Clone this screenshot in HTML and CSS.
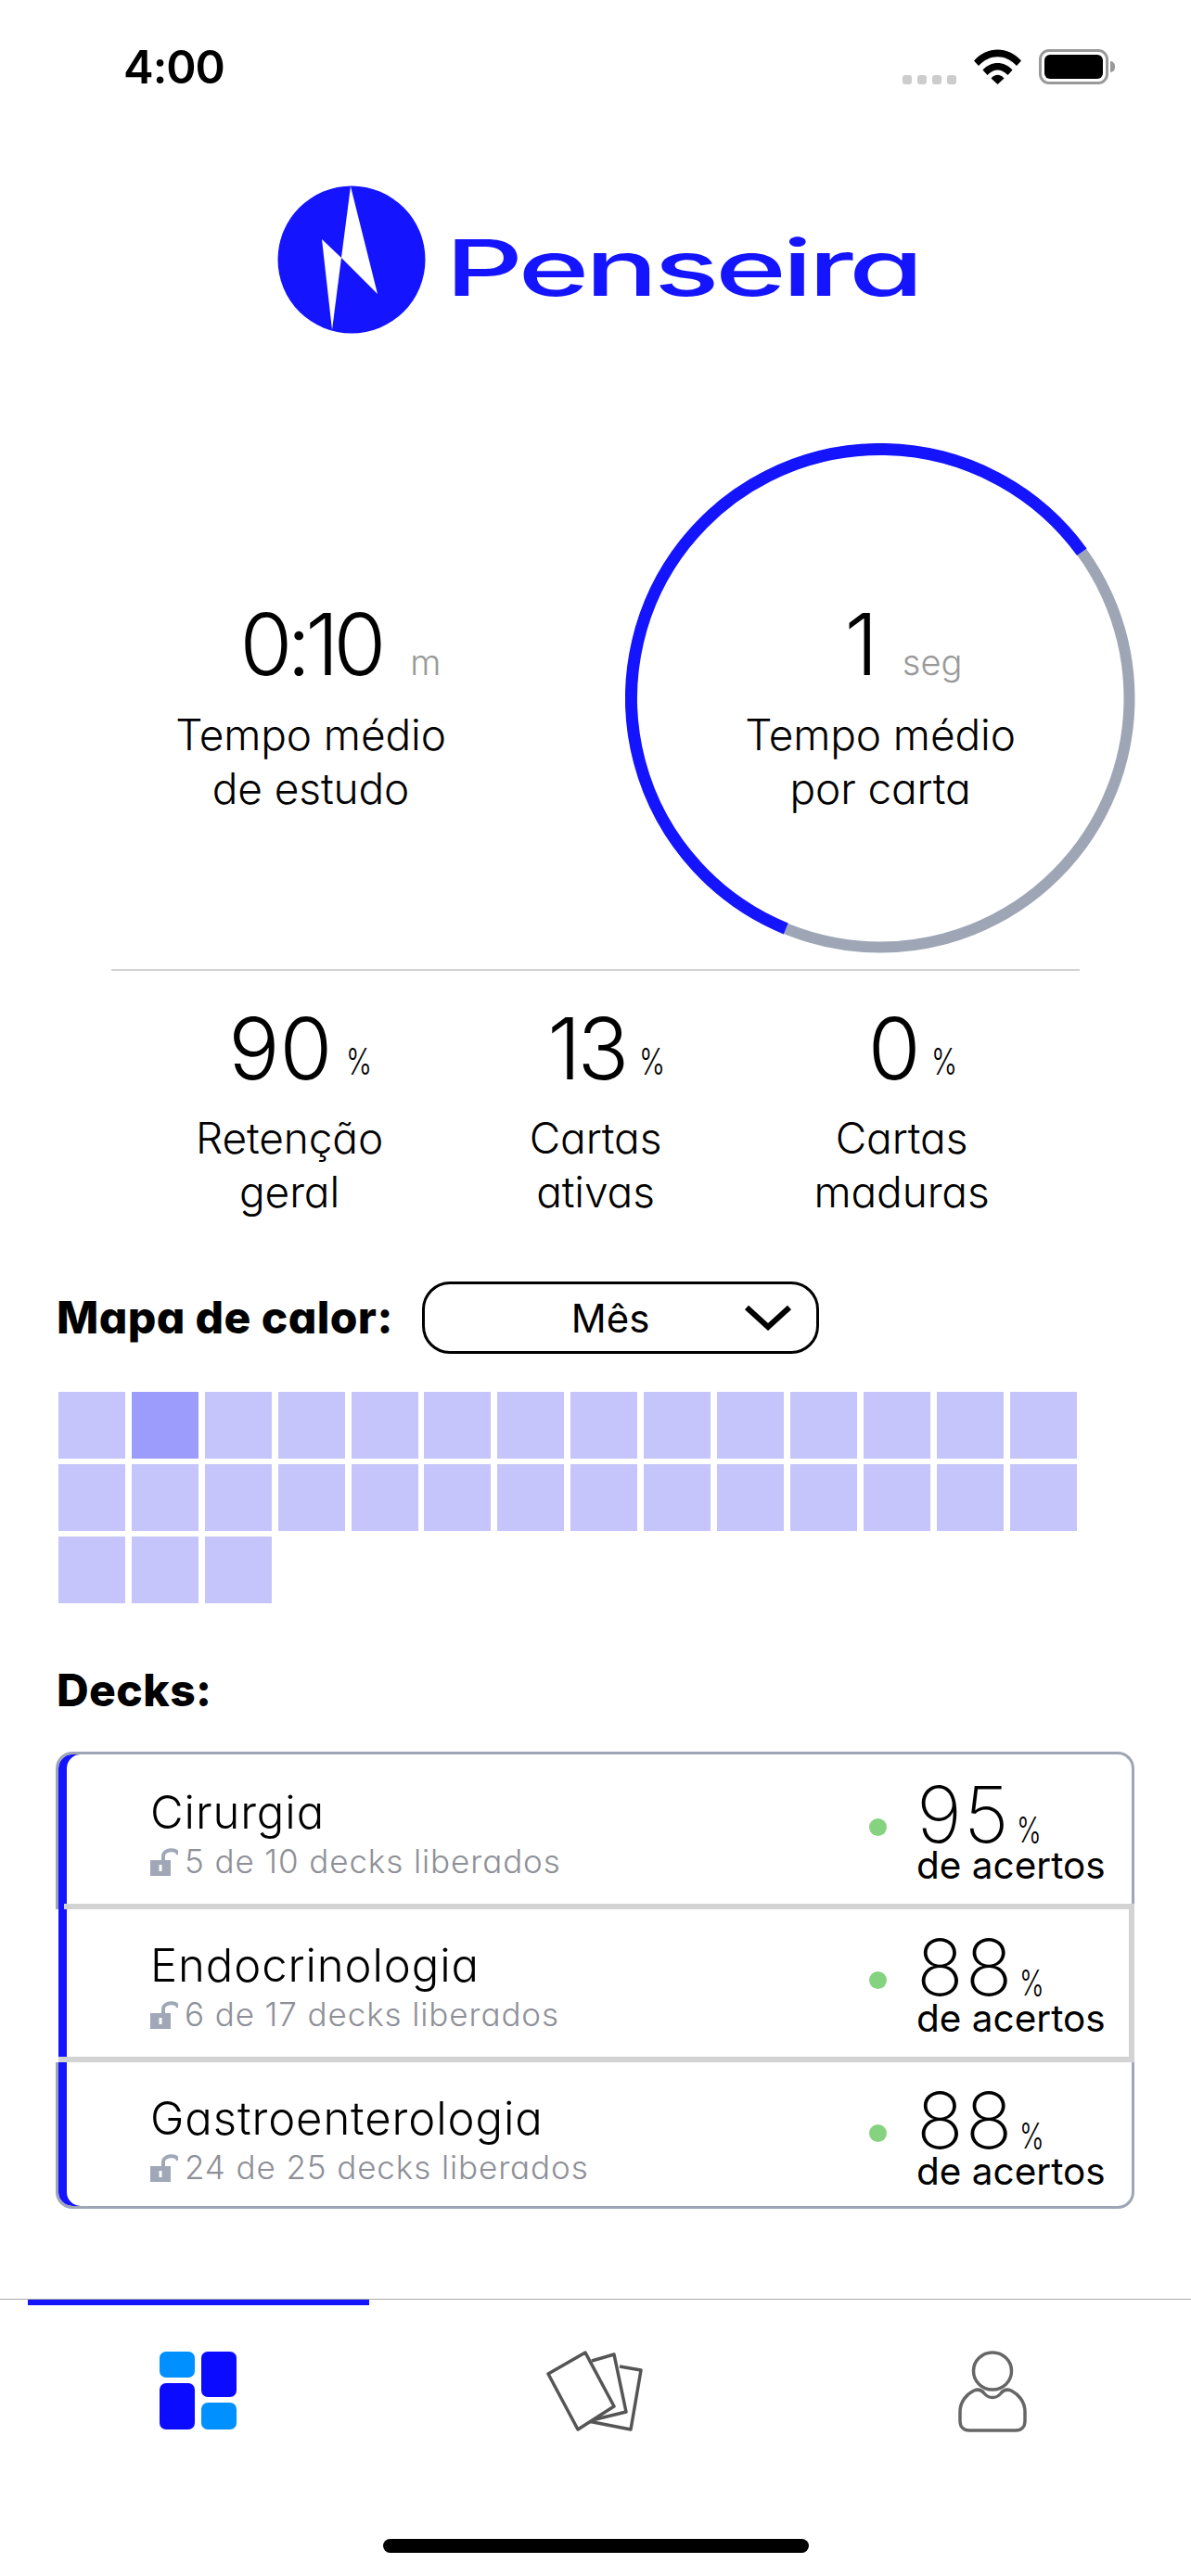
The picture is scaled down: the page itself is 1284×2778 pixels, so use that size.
FILE: index.html
```html
<!DOCTYPE html>
<html lang="pt-BR">
<head>
<meta charset="utf-8">
<title>Penseira</title>
<link rel="stylesheet" href="styles.css">
</head>
<body>
<div class="screen">
  <header class="statusbar">
    <span class="time">4:00</span>
    <div class="status-icons">
      <div class="signal"><i></i><i></i><i></i><i></i></div>
      <svg class="wifi" viewBox="0 0 51 38"><path d="M0 12.5C14-3.5 37-3.5 51 12.5L46 18C34 5 17 5 5 18Z"/><path d="M9.500 22.500C18 12.500 33 12.500 41.500 22.500L36.500 28C30 20.500 21 20.500 14.500 28Z"/><path d="M18.500 31.500C22.500 26.500 28.500 26.500 32.500 31.500L25.500 38Z"/></svg>
      <div class="battery"><div class="battery-body"><div class="battery-fill"></div></div><div class="battery-nub"></div></div>
    </div>
  </header>

  <div class="logo">
    <svg class="logo-mark" viewBox="0 0 160 160"><circle cx="80" cy="80" r="79.500" fill="#1414ff"/><path fill="#fff" d="M79 1 69 78 108 117Z"/><path fill="#fff" d="M48 58 69 78 59 156Z"/></svg>
    <div class="wordmark"><span>Penseira</span></div>
  </div>

  <section class="time-stats">
    <div class="stat stat-left">
      <div class="stat-value value-left"><span class="num">0:10</span><span class="unit">m</span></div>
      <div class="stat-label">Tempo médio<br>de estudo</div>
    </div>
    <div class="ring">
      <svg class="ring-svg" viewBox="0 0 550 550"><circle cx="275" cy="275" r="268.500" fill="none" stroke="#9ea6b6" stroke-width="12"/><path d="M492.300 117.200A268.500 268.500 0 1 0 173.200 523.400" fill="none" stroke="#1414ff" stroke-width="13"/></svg>
      <div class="stat">
        <div class="stat-value value-right"><span class="num">1</span><span class="unit">seg</span></div>
        <div class="stat-label">Tempo médio<br>por carta</div>
      </div>
    </div>
  </section>

  <hr class="divider">

  <section class="pct-stats">
    <div class="pct"><div class="pct-value"><span class="num num-wide">90</span><span class="pct-sign">%</span></div><div class="stat-label">Retenção<br>geral</div></div>
    <div class="pct"><div class="pct-value"><span class="num">13</span><span class="pct-sign">%</span></div><div class="stat-label">Cartas<br>ativas</div></div>
    <div class="pct"><div class="pct-value"><span class="num">0</span><span class="pct-sign">%</span></div><div class="stat-label">Cartas<br>maduras</div></div>
  </section>

  <section class="map-head">
    <h2 class="heading">Mapa de calor:</h2>
    <div class="select">
      <span class="select-text">Mês</span>
      <svg class="chevron" viewBox="0 0 52 28"><path d="M3 3 26 24 49 3" fill="none" stroke="#000" stroke-width="6"/></svg>
    </div>
  </section>

  <section class="heat">
    <i></i><i class="hot"></i><i></i><i></i><i></i><i></i><i></i><i></i><i></i><i></i><i></i><i></i><i></i><i></i>
    <i></i><i></i><i></i><i></i><i></i><i></i><i></i><i></i><i></i><i></i><i></i><i></i><i></i><i></i>
    <i></i><i></i><i></i>
  </section>

  <h2 class="heading decks-title">Decks:</h2>

  <section class="decks">
    <article class="deck deck-first">
      <div class="deck-info">
        <div class="deck-name">Cirurgia</div>
        <div class="deck-sub"><svg class="lock" viewBox="0 0 30 30"><path d="M0 13H22V30H0Z"/><path d="M14 13V8C14 2 29 -1 30 7" fill="none" stroke="currentColor" stroke-width="4"/><path class="keyhole" d="M9.500 18H12.500V25H9.500Z"/></svg>5 de 10 decks liberados</div>
      </div>
      <i class="dot"></i>
      <div class="score"><div class="score-value"><span class="score-num">95</span><span class="score-pct">%</span></div><div class="score-label">de acertos</div></div>
    </article>
    <article class="deck deck-middle">
      <div class="deck-info">
        <div class="deck-name">Endocrinologia</div>
        <div class="deck-sub"><svg class="lock" viewBox="0 0 30 30"><path d="M0 13H22V30H0Z"/><path d="M14 13V8C14 2 29 -1 30 7" fill="none" stroke="currentColor" stroke-width="4"/><path class="keyhole" d="M9.500 18H12.500V25H9.500Z"/></svg>6 de 17 decks liberados</div>
      </div>
      <i class="dot"></i>
      <div class="score"><div class="score-value"><span class="score-num">88</span><span class="score-pct">%</span></div><div class="score-label">de acertos</div></div>
    </article>
    <article class="deck deck-last">
      <div class="deck-info">
        <div class="deck-name">Gastroenterologia</div>
        <div class="deck-sub"><svg class="lock" viewBox="0 0 30 30"><path d="M0 13H22V30H0Z"/><path d="M14 13V8C14 2 29 -1 30 7" fill="none" stroke="currentColor" stroke-width="4"/><path class="keyhole" d="M9.500 18H12.500V25H9.500Z"/></svg>24 de 25 decks liberados</div>
      </div>
      <i class="dot"></i>
      <div class="score"><div class="score-value"><span class="score-num">88</span><span class="score-pct">%</span></div><div class="score-label">de acertos</div></div>
    </article>
  </section>

  <nav class="tabbar">
    <div class="tab tab-active">
      <svg class="tab-icon-dash" viewBox="0 0 83 84"><rect x="0" y="0" width="38" height="28" rx="7" fill="#0090ff"/><rect x="0" y="34" width="38" height="50" rx="7" fill="#0b0bff"/><rect x="45" y="0" width="38" height="49" rx="7" fill="#0b0bff"/><rect x="45" y="55" width="38" height="29" rx="7" fill="#0090ff"/></svg>
    </div>
    <div class="tab">
      <svg class="tab-icon-cards" viewBox="0 0 104 88"><g fill="none" stroke="#555" stroke-width="3.500" stroke-linejoin="round"><path d="M79 17 102 21 91 85 45 76"/><path d="M49 11 73 4 86 66 45 76"/><path d="M42 2 2 25 34 85 73 60Z" fill="#fff"/></g></svg>
    </div>
    <div class="tab">
      <svg class="tab-icon-user" viewBox="0 0 74 88"><g fill="none" stroke="#666" stroke-width="3.500"><ellipse cx="37" cy="22" rx="20.500" ry="20"/><path d="M17 43C22 41 25 42 28 46 33 52 41 52 46 46 49 42 52 41 57 43 65 47 72 55 72 66V76C72 82 68 86 62 86H12C6 86 2 82 2 76V66C2 55 9 47 17 43Z"/></g></svg>
    </div>
  </nav>
  <div class="home-row"><div class="home-indicator"></div></div>
</div>
</body>
</html>
```
FILE: styles.css
```css
* { box-sizing: border-box; }
html, body { margin: 0; padding: 0; background: #fff; }
body { font-family: Inter, "Liberation Sans", sans-serif; color: #000; font-feature-settings: "cv11" 1; }
.screen { width: 1284px; height: 2778px; overflow: hidden; display: flex; flex-direction: column; }

.statusbar { height: 112px; padding: 49px 82px 0 133px; display: flex; justify-content: space-between; align-items: flex-start; flex: none; }
.time { font-size: 49px; font-weight: 600; line-height: 48px; letter-spacing: -1px; font-feature-settings: normal; }
.status-icons { display: flex; align-items: flex-start; margin-top: 4px; }
.signal { display: flex; gap: 6px; margin-top: 28px; margin-right: 19px; }
.signal i { width: 10px; height: 10px; border-radius: 3px; background: #ccc; }
.wifi { width: 51px; height: 38px; margin-right: 19px; }
.battery { display: flex; align-items: center; height: 38px; }
.battery-body { width: 75px; height: 38px; border: 3.500px solid #999; border-radius: 11px; padding: 3px; }
.battery-fill { width: 100%; height: 100%; background: #000; border-radius: 6px; }
.battery-nub { width: 5px; height: 12px; margin-left: 2px; background: #999; border-radius: 0 6px 6px 0; }

.logo { height: 160px; margin-top: 88px; padding-left: 299px; display: flex; flex: none; }
.logo-mark { width: 160px; height: 160px; flex: none; }
.wordmark { margin-left: 30px; width: 495px; height: 160px; color: #1414ff; }
.wordmark span { display: inline-block; font-size: 84px; font-weight: 500; line-height: 100px; letter-spacing: -3px; margin-top: 39px; margin-left: -9px; transform: scaleX(1.56); transform-origin: left center; }

.time-stats { display: flex; height: 552px; margin-top: 118px; padding-left: 120px; flex: none; }
.stat { display: flex; flex-direction: column; align-items: center; justify-content: flex-start; }
.stat-left { width: 430px; padding-top: 164px; margin-right: 124px; }
.ring { position: relative; width: 550px; height: 552px; flex: none; display: flex; justify-content: center; padding-top: 164px; }
.ring-svg { position: absolute; left: 0; top: 0; width: 550px; height: 550px; }
.stat-value { display: flex; align-items: baseline; justify-content: center; height: 121px; line-height: 106px; }
.value-left { padding-left: 64px; }
.value-right { padding-left: 50px; }
.num { font-size: 92px; font-weight: 300; letter-spacing: -6px; font-feature-settings: normal; }
.unit { font-size: 38px; font-weight: 300; color: #999; margin-left: 32px; letter-spacing: 0; }
.stat-label { font-size: 46px; font-weight: 300; line-height: 58px; text-align: center; letter-spacing: -0.1px; }

.divider { height: 2px; margin: 15px 120px 0; padding: 0; border: 0; background: #d3d3d3; flex: none; }

.pct-stats { display: grid; grid-template-columns: repeat(3, 330px); padding-left: 147px; margin-top: 30px; height: 320px; flex: none; }
.pct { display: flex; flex-direction: column; align-items: center; }
.pct-value { display: flex; align-items: baseline; height: 121px; line-height: 108px; padding-left: 24px; }
.pct-value .num { letter-spacing: -4px; }
.pct-value .num-wide { letter-spacing: 0; }
.pct-sign { font-size: 40px; font-weight: 300; margin-left: 15px; margin-right: -9px; transform: translateY(-5px) scaleX(0.75); transform-origin: left bottom; }

.map-head { display: flex; align-items: center; padding-left: 61px; height: 78px; margin-top: -15px; flex: none; }
.heading { margin: 0; font-size: 48px; font-weight: 800; letter-spacing: 0.4px; line-height: 56px; }
.select { display: flex; align-items: center; justify-content: space-between; width: 428px; height: 78px; margin-left: 31px; border: 3.500px solid #000; border-radius: 30px; padding: 0 26px 0 158px; }
.select-text { font-size: 42px; font-weight: 400; font-feature-settings: normal; }
.chevron { width: 52px; height: 28px; }

.heat { display: grid; grid-template-columns: repeat(14, 72px); grid-auto-rows: 72px; column-gap: 6.900px; row-gap: 6px; padding-left: 63px; margin-top: 41px; flex: none; }
.heat i { background: #c5c5fc; }
.heat i.hot { background: #9c9cfd; }

.decks-title { margin: 66px 0 0 61px; }

.decks { display: flex; flex-direction: column; width: 1163px; margin: 38px 0 0 60px; flex: none; }
.deck { display: flex; align-items: flex-start; background: #fff; }
.deck-first { height: 170px; border: 3px solid #9ea6b6; border-bottom: 0; border-radius: 18px 18px 0 0; box-shadow: inset 9px 0 0 #1414ff; position: relative; padding: 35px 15px 0 99px; }
.deck-first::after { content: ""; position: absolute; left: 6px; right: -3px; bottom: 0; height: 6px; background: #d3d3d3; }
.deck-middle { height: 165px; margin-left: 3px; border-right: 6px solid #d3d3d3; border-bottom: 6px solid #d3d3d3; box-shadow: inset 9px 0 0 #1414ff; padding: 33px 12px 0 99px; }
.deck-last { height: 158px; border: 3px solid #9ea6b6; border-top: 0; border-radius: 0 0 18px 18px; box-shadow: inset 9px 0 0 #1414ff; padding: 33px 15px 0 99px; }
.deck-info { flex: 1; }
.deck-name { font-size: 49px; font-weight: 300; line-height: 56px; letter-spacing: 0.9px; }
.deck-sub { display: flex; align-items: flex-end; font-size: 35px; font-weight: 300; line-height: 40px; color: #8e9098; letter-spacing: 0.9px; margin-top: 4px; }
.lock { width: 30px; height: 30px; margin: 0 7px 4px 0; color: #a0a8b8; fill: currentColor; flex: none; }
.keyhole { fill: #fff; }
.dot { width: 19px; height: 19px; border-radius: 50%; background: #85d37f; margin: 34px 32px 0 0; flex: none; }
.score { width: 217px; flex: none; }
.score-value { display: flex; align-items: baseline; height: 60px; line-height: 60px; }
.score-num { font-size: 84px; font-weight: 200; letter-spacing: 2px; font-feature-settings: normal; line-height: 60px; }
.score-pct { font-size: 38px; font-weight: 300; margin-left: 6px; line-height: 30px; transform: scaleX(0.75); transform-origin: left bottom; }
.score-label { font-size: 40.500px; font-weight: 400; line-height: 44px; margin-top: 3px; font-feature-settings: normal; letter-spacing: 0; }

.tabbar { display: grid; grid-template-columns: 428px 428px 428px; height: 190px; margin-top: 97px; border-top: 1.500px solid #aaa; flex: none; }
.tab { display: flex; justify-content: center; padding-top: 56px; align-items: flex-start; }
.tab-active { position: relative; }
.tab-active::before { content: ""; position: absolute; left: 30px; width: 368px; top: 0; height: 6px; background: #1414ff; }
.tab-icon-dash { width: 83px; height: 84px; margin-left: -1px; }
.tab-icon-cards { width: 104px; height: 88px; margin-top: -1px; margin-right: 2px; }
.tab-icon-user { width: 74px; height: 88px; margin-top: -1px; margin-left: 0; }
.home-row { display: flex; justify-content: center; margin-top: 69px; padding-right: 0; }
.home-indicator { width: 459px; height: 15px; border-radius: 8px; background: #000; }
```
